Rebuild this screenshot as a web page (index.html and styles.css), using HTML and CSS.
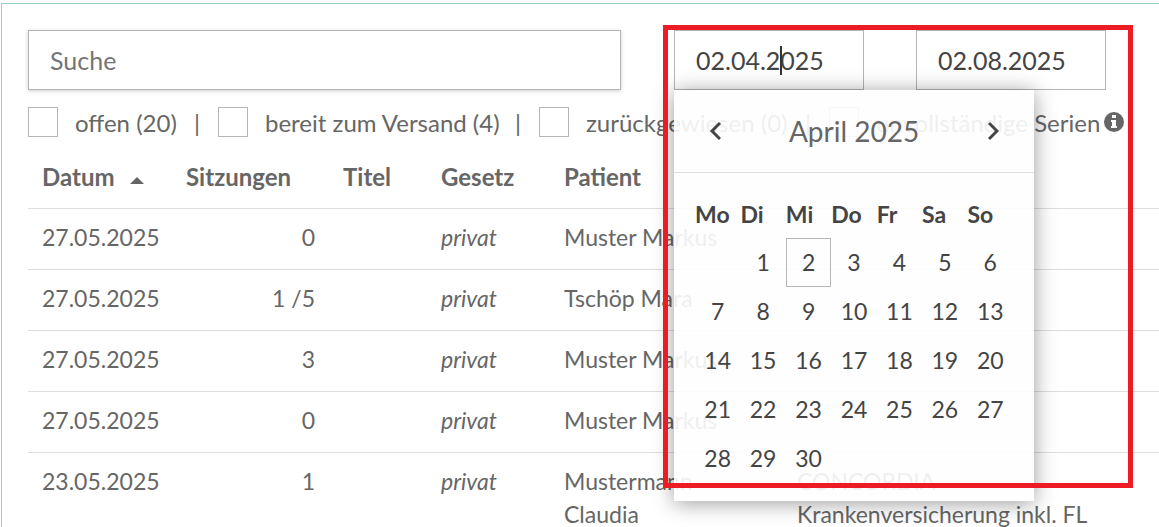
FILE: index.html
```
<!DOCTYPE html>
<html lang="de">
<head>
    <meta charset="utf-8">
    <meta name="viewport" content="width=device-width, initial-scale=1">
    <title>Rechnungen</title>
    <link rel="stylesheet" href="styles.css">
</head>

<body>
<main class="panel">
    <form action="">
    <div class="toolbar">
        <input class="field search" type="text" placeholder="Suche" aria-label="Suche">

        <div class="range">
            <div class="date">
                <input class="field" type="text" value="02.04.2025" aria-label="Datum von">
                <span class="caret"></span>

                <!-- date picker -->
                <div class="picker">
                    <div class="picker-head">
                        <button type="button" aria-label="Voriger Monat">
                            <svg width="12" height="20" viewBox="0 0 12 20"><path d="M11 2L3 10L11 18" /></svg>
                        </button>
                        <span class="month">April 2025</span>
                        <button type="button" aria-label="Nächster Monat">
                            <svg width="12" height="20" viewBox="0 0 12 20"><path d="M2 2L10 10L2 18" /></svg>
                        </button>
                    </div>
                    <table class="days">
                        <thead>
                            <tr><th>Mo</th><th>Di</th><th>Mi</th><th>Do</th><th>Fr</th><th>Sa</th><th>So</th></tr>
                        </thead>
                        <tbody>
                            <tr>
                                <td></td>
                                <td><button type="button">1</button></td>
                                <td><button type="button" class="selected">2</button></td>
                                <td><button type="button">3</button></td>
                                <td><button type="button">4</button></td>
                                <td><button type="button">5</button></td>
                                <td><button type="button">6</button></td>
                            </tr>
                            <tr>
                                <td><button type="button">7</button></td>
                                <td><button type="button">8</button></td>
                                <td><button type="button">9</button></td>
                                <td><button type="button">10</button></td>
                                <td><button type="button">11</button></td>
                                <td><button type="button">12</button></td>
                                <td><button type="button">13</button></td>
                            </tr>
                            <tr>
                                <td><button type="button">14</button></td>
                                <td><button type="button">15</button></td>
                                <td><button type="button">16</button></td>
                                <td><button type="button">17</button></td>
                                <td><button type="button">18</button></td>
                                <td><button type="button">19</button></td>
                                <td><button type="button">20</button></td>
                            </tr>
                            <tr>
                                <td><button type="button">21</button></td>
                                <td><button type="button">22</button></td>
                                <td><button type="button">23</button></td>
                                <td><button type="button">24</button></td>
                                <td><button type="button">25</button></td>
                                <td><button type="button">26</button></td>
                                <td><button type="button">27</button></td>
                            </tr>
                            <tr>
                                <td><button type="button">28</button></td>
                                <td><button type="button">29</button></td>
                                <td><button type="button">30</button></td>
                                <td></td>
                                <td></td>
                                <td></td>
                                <td></td>
                            </tr>
                        </tbody>
                    </table>
                </div>
            </div>

            <div class="date">
                <input class="field" type="text" value="02.08.2025" aria-label="Datum bis">
            </div>

            <div class="highlight"></div>
        </div>
    </div>

    <div class="filters">
        <div class="filter">
            <input type="checkbox" id="open"><label for="open">offen (20)</label>
            <span class="sep">|</span>
        </div>
        <div class="filter">
            <input type="checkbox" id="ready"><label for="ready">bereit zum Versand (4)</label>
            <span class="sep">|</span>
        </div>
        <div class="filter">
            <input type="checkbox" id="rejected"><label for="rejected">zurückgewiesen (0)</label>
            <span class="sep">|</span>
        </div>
        <div class="filter">
            <input type="checkbox" id="partial"><label for="partial">unvollständige Serien</label>
            <svg class="info" width="20" height="20" viewBox="0 0 20 20">
                <circle cx="10" cy="10" r="10" fill="#666" />
                <path d="M8 3h4v3H8zM7 8h5v6h1v2H7v-2h1v-4H7z" fill="#fff" />
            </svg>
        </div>
    </div>
    </form>

    <table class="list">
        <colgroup>
            <col class="c-date"><col class="c-count"><col class="c-title"><col class="c-law"><col class="c-patient"><col>
        </colgroup>
        <thead>
            <tr>
                <th>Datum <span class="sort"></span></th>
                <th>Sitzungen</th>
                <th>Titel</th>
                <th>Gesetz</th>
                <th>Patient</th>
                <th></th>
            </tr>
        </thead>
        <tbody>
            <tr>
                <td>27.05.2025</td>
                <td class="count">0</td>
                <td></td>
                <td class="law">privat</td>
                <td>Muster Markus</td>
                <td></td>
            </tr>
            <tr>
                <td>27.05.2025</td>
                <td class="count">1 /5</td>
                <td></td>
                <td class="law">privat</td>
                <td>Tschöp Mara</td>
                <td></td>
            </tr>
            <tr>
                <td>27.05.2025</td>
                <td class="count">3</td>
                <td></td>
                <td class="law">privat</td>
                <td>Muster Markus</td>
                <td></td>
            </tr>
            <tr>
                <td>27.05.2025</td>
                <td class="count">0</td>
                <td></td>
                <td class="law">privat</td>
                <td>Muster Markus</td>
                <td></td>
            </tr>
            <tr>
                <td>23.05.2025</td>
                <td class="count">1</td>
                <td></td>
                <td class="law">privat</td>
                <td>Mustermann<br>Claudia</td>
                <td>CONCORDIA<br>Krankenversicherung inkl. FL</td>
            </tr>
        </tbody>
    </table>
</main>
</body>

</html>
```
FILE: styles.css
```
* {
    box-sizing: border-box;
}
body {
    margin: 0;
    padding: 3px 0 0 1px;
    overflow: hidden;
    background: #fff;
    color: #666;
    font-family: Lato, "Open Sans", sans-serif;
    font-size: 23px;
    line-height: 33px;
}
input, button {
    font: inherit;
    color: #444;
}
table {
    width: 100%;
    table-layout: fixed;
    border-collapse: collapse;
}
th {
    text-align: left;
}

.panel {
    padding: 26px 0 0 26px;
    border-top: 1px solid #8fd0d0;
    border-left: 1px solid #8fd0d0;
}

/* search and dates */
.toolbar {
    display: flex;
    gap: 53px;
    padding-right: 53px;
}
.field {
    display: block;
    width: 100%;
    height: 60px;
    padding: 0 21px;
    border: 1px solid #b5b5b5;
    background: #fff;
    font-size: 25px;
}
.search {
    flex: 1;
    min-width: 0;
    box-shadow: 0 1px 4px rgba(0, 0, 0, 0.2);
}
.field::placeholder {
    color: #757575;
}
.range {
    position: relative;
    display: flex;
    gap: 52px;
}
.date {
    position: relative;
    width: 190px;
}
.caret {
    position: absolute;
    top: 16px;
    left: 106px;
    width: 2px;
    height: 29px;
    background: #333;
}
.highlight {
    position: absolute;
    z-index: 3;
    top: -5px;
    left: -11px;
    right: -27px;
    height: 463px;
    border: 5px solid #ed1c24;
    pointer-events: none;
}

/* date picker */
.picker {
    position: absolute;
    z-index: 2;
    top: 100%;
    left: 0;
    width: 360px;
    padding-bottom: 18px;
    background: rgba(254, 254, 254, 0.9);
    box-shadow: 0 2px 20px rgba(0, 0, 0, 0.4);
    color: #444;
}
.picker-head {
    display: flex;
    justify-content: space-between;
    align-items: center;
    height: 83px;
    padding: 0 25px;
    border-bottom: 1px solid #ddd;
}
.picker button {
    padding: 0;
    border: 1px solid transparent;
    background: none;
}
.picker-head button {
    width: 32px;
    height: 32px;
}
.picker-head svg {
    display: block;
    margin: auto;
    fill: none;
    stroke: #444;
    stroke-width: 3;
}
.month {
    color: #666;
    font-size: 28px;
}
.days {
    width: calc(100% - 42px);
    margin: 17px 21px 0;
}
.days th {
    height: 48px;
    padding: 0;
}
.days td {
    height: 49px;
    padding: 0;
}
.days td button {
    display: block;
    width: 100%;
    height: 49px;
}
.days td .selected {
    border-color: #b5b5b5;
}

/* status filters */
.filters {
    display: grid;
    grid-template-columns: 190px 321px 290px auto;
    margin: 17px 0 9px;
    font-size: 24px;
}
.filter {
    display: flex;
    align-items: center;
    height: 30px;
    white-space: nowrap;
}
.filter input {
    appearance: none;
    width: 30px;
    height: 30px;
    margin: 0 17px 0 0;
    border: 1px solid #b5b5b5;
    background: #fff;
}
.sep {
    margin: 0 18px 0 auto;
}
.info {
    margin-left: 4px;
}

/* list */
.list th, .list td {
    padding: 12px 14px 15px;
    vertical-align: top;
    white-space: nowrap;
}
.list th {
    padding-top: 14px;
    font-size: 24px;
}
.list tr {
    border-bottom: 1px solid #ddd;
}
.c-date {
    width: 144px;
}
.c-count {
    width: 157px;
}
.c-title {
    width: 98px;
}
.c-law {
    width: 123px;
}
.c-patient {
    width: 233px;
}
.list .count {
    text-align: right;
}
.law {
    font-style: italic;
}
.sort {
    display: inline-block;
    margin-left: 10px;
    border: 7px solid transparent;
    border-top: 0;
    border-bottom-color: #666;
    vertical-align: 2px;
}
```
